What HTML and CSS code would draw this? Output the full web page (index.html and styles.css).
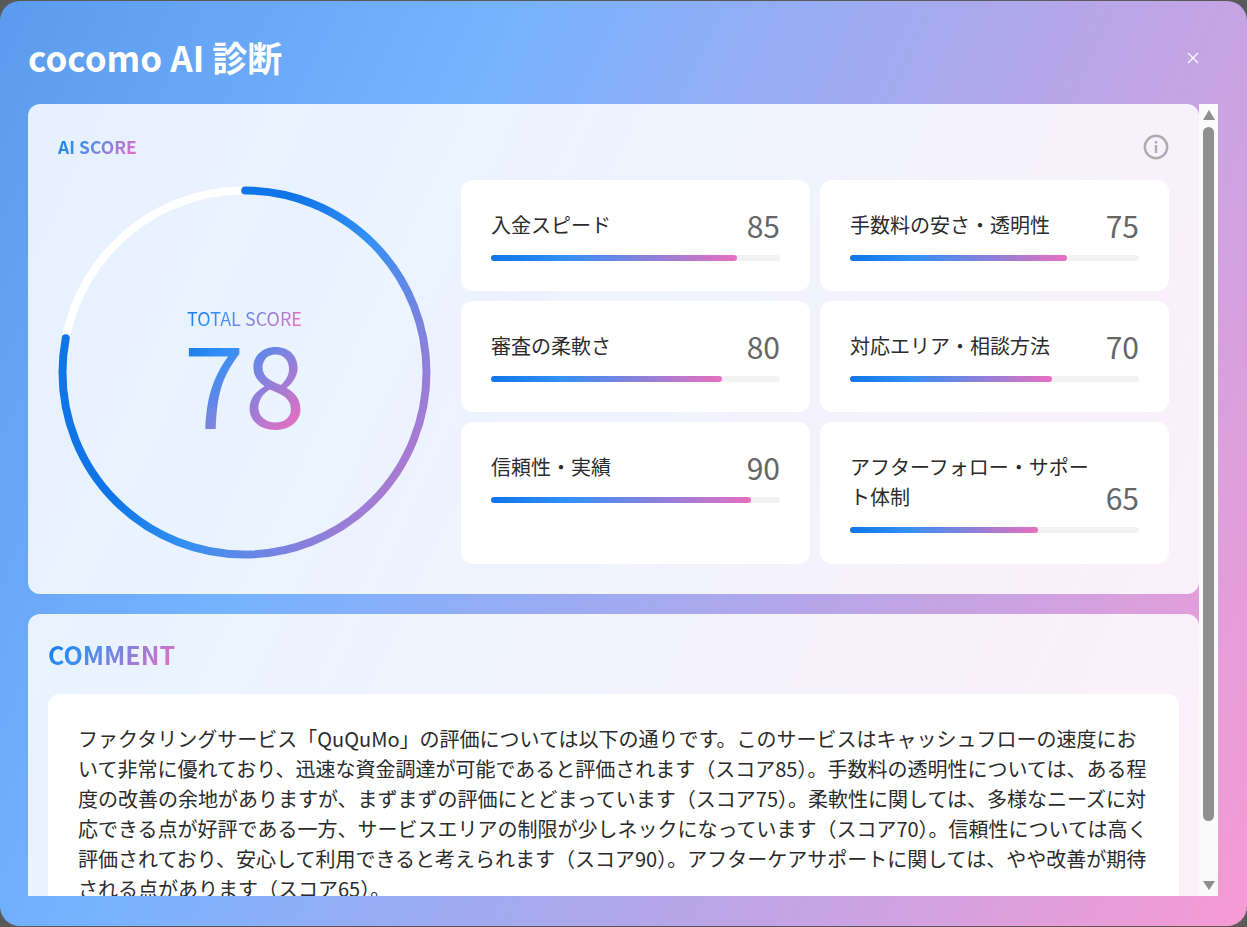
FILE: index.html
```html
<!DOCTYPE html>
<html lang="ja">
<head>
  <meta charset="UTF-8" />
  <meta name="viewport" content="width=device-width, initial-scale=1">
  <title>cocomo AI 診断</title>
  <link rel="stylesheet" href="styles.css">
</head>
<body>

  <div class="modal">
    <div class="modal-header">
      <h1 class="modal-title">cocomo AI 診断</h1>
      <svg class="close-icon" width="12" height="12" viewBox="0 0 12 12">
        <path d="M1 1L11 11M11 1L1 11" stroke="#fff" stroke-width="1.1" fill="none" />
      </svg>
    </div>

    <div class="modal-body">
      <div class="scroll-content">

        <section class="score-card">
          <div class="score-head">
            <span class="score-title grad-text">AI SCORE</span>
            <svg class="info-icon" width="26" height="26" viewBox="0 0 26 26">
              <circle cx="13" cy="13" r="11.2" stroke="#acacac" stroke-width="2.4" fill="none" />
              <rect x="11.8" y="11" width="2.4" height="8" fill="#acacac" />
              <rect x="11.8" y="7" width="2.4" height="2.5" fill="#acacac" />
            </svg>
          </div>

          <div class="score-main">
            <div class="ring">
              <svg width="373" height="373" viewBox="0 0 373 373">
                <defs>
                  <linearGradient id="ringGrad" gradientUnits="userSpaceOnUse" x1="145.5" y1="161.8" x2="412" y2="322">
                    <stop offset="0" stop-color="#0f75e8" />
                    <stop offset="0.27" stop-color="#3390f5" />
                    <stop offset="1" stop-color="#e86fc0" />
                  </linearGradient>
                </defs>
                <circle cx="186.5" cy="186.5" r="182" stroke="#fff" stroke-width="8" fill="none" />
                <circle cx="186.5" cy="186.5" r="182" stroke="url(#ringGrad)" stroke-width="8" fill="none"
                  stroke-linecap="round" stroke-dasharray="892 252" stroke-dashoffset="286" />
              </svg>
              <div class="ring-center">
                <span class="total-label grad-text">TOTAL SCORE</span>
                <span class="total-value grad-text">78</span>
              </div>
            </div>

            <div class="metric-grid">
              <div class="metric">
                <div class="metric-row"><span class="metric-label">入金スピード</span><span class="metric-value">85</span></div>
                <div class="metric-bar"><div class="metric-fill" style="width:85%"></div></div>
              </div>
              <div class="metric">
                <div class="metric-row"><span class="metric-label">手数料の安さ・透明性</span><span class="metric-value">75</span></div>
                <div class="metric-bar"><div class="metric-fill" style="width:75%"></div></div>
              </div>
              <div class="metric">
                <div class="metric-row"><span class="metric-label">審査の柔軟さ</span><span class="metric-value">80</span></div>
                <div class="metric-bar"><div class="metric-fill" style="width:80%"></div></div>
              </div>
              <div class="metric">
                <div class="metric-row"><span class="metric-label">対応エリア・相談方法</span><span class="metric-value">70</span></div>
                <div class="metric-bar"><div class="metric-fill" style="width:70%"></div></div>
              </div>
              <div class="metric">
                <div class="metric-row"><span class="metric-label">信頼性・実績</span><span class="metric-value">90</span></div>
                <div class="metric-bar"><div class="metric-fill" style="width:90%"></div></div>
              </div>
              <div class="metric">
                <div class="metric-row"><span class="metric-label">アフターフォロー・サポート体制</span><span class="metric-value">65</span></div>
                <div class="metric-bar"><div class="metric-fill" style="width:65%"></div></div>
              </div>
            </div>
          </div>
        </section>

        <section class="comment-card">
          <h2 class="comment-title"><span class="grad-text">COMMENT</span></h2>
          <div class="comment-box">
            <p>ファクタリングサービス「QuQuMo」の評価については以下の通りです。このサービスはキャッシュフローの速度において非常に優れており、迅速な資金調達が可能であると評価されます（スコア85）。手数料の透明性については、ある程度の改善の余地がありますが、まずまずの評価にとどまっています（スコア75）。柔軟性に関しては、多様なニーズに対応できる点が好評である一方、サービスエリアの制限が少しネックになっています（スコア70）。信頼性については高く評価されており、安心して利用できると考えられます（スコア90）。アフターケアサポートに関しては、やや改善が期待される点があります（スコア65）。</p>
          </div>
        </section>

      </div>

      <div class="scrollbar">
        <div class="arrow-up"></div>
        <div class="thumb"></div>
        <div class="arrow-down"></div>
      </div>
    </div>
  </div>

</body>
</html>
```

FILE: styles.css
```css
html, body {
  margin: 0;
  padding: 0;
  height: 100%;
  overflow: hidden;
  background: #5a5a5a;
  font-family: "Noto Sans CJK JP", "Noto Sans", sans-serif;
}

.modal {
  box-sizing: border-box;
  width: 1247px;
  height: 925px;
  margin-top: 1px;
  display: flex;
  flex-direction: column;
  border-radius: 20px;
  background: linear-gradient(115deg, #5a9bed 0%, #75b3ff 30%, #f79ad3 100%);
  overflow: hidden;
}

.modal-header {
  height: 103px;
  flex: none;
  display: flex;
  justify-content: space-between;
  align-items: center;
  padding: 8px 48px 0 28px;
  box-sizing: border-box;
}

.modal-title {
  margin: 0;
  font-size: 35px;
  line-height: 1;
  font-weight: 700;
  color: #fff;
}

.close-icon {
  margin-top: 2px;
}

.modal-body {
  flex: none;
  height: 792px;
  display: flex;
  margin: 0 29px 0 28px;
  overflow: hidden;
}

.scroll-content {
  flex: 1;
  min-width: 0;
  overflow: hidden;
}

.scrollbar {
  flex: none;
  width: 19px;
  height: 100%;
  box-sizing: border-box;
  padding: 6px 4px;
  background: #fafafa;
  display: flex;
  flex-direction: column;
  align-items: center;
}

.arrow-up {
  width: 0;
  height: 0;
  border-left: 6px solid transparent;
  border-right: 6px solid transparent;
  border-bottom: 10px solid #8f8f8f;
}

.arrow-down {
  width: 0;
  height: 0;
  margin-top: 60px;
  border-left: 6px solid transparent;
  border-right: 6px solid transparent;
  border-top: 9px solid #8f8f8f;
}

.thumb {
  width: 11px;
  height: 694px;
  margin-top: 7px;
  border-radius: 6px;
  background: #8f8f8f;
}

.grad-text {
  display: inline-block;
  background: linear-gradient(135deg, #0f75e8 0%, #3390f5 28%, #e86fc0 94%);
  -webkit-background-clip: text;
  background-clip: text;
  color: transparent;
}

.score-card {
  box-sizing: border-box;
  height: 490px;
  padding: 30px;
  border-radius: 12px;
  background: rgba(255, 255, 255, 0.85);
}

.score-head {
  height: 26px;
  margin-bottom: 20px;
  display: flex;
  justify-content: space-between;
  align-items: center;
}

.score-title {
  font-size: 17.5px;
  line-height: 26px;
  font-weight: 700;
}

.score-main {
  display: flex;
  align-items: center;
  gap: 30px;
}

.ring {
  position: relative;
  flex: none;
  width: 373px;
  height: 373px;
}

.ring svg {
  display: block;
}

.ring-center {
  position: absolute;
  top: 0;
  left: 0;
  width: 100%;
  height: 100%;
  box-sizing: border-box;
  padding-bottom: 9px;
  display: flex;
  flex-direction: column;
  align-items: center;
  justify-content: center;
}

.total-label {
  font-size: 18px;
  line-height: 26px;
}

.total-value {
  font-size: 110px;
  line-height: 100px;
}

.metric-grid {
  flex: 1;
  min-width: 0;
  display: grid;
  grid-template-columns: 1fr 1fr;
  grid-template-rows: 111px 111px 142px;
  gap: 10px;
}

.metric {
  padding: 30px;
  border-radius: 12px;
  background: #fff;
}

.metric-row {
  display: flex;
  justify-content: space-between;
  align-items: flex-end;
  gap: 16px;
  margin-bottom: 15px;
}

.metric-label {
  font-size: 20px;
  line-height: 30px;
  color: #2b2b2b;
}

.metric-value {
  flex: none;
  font-size: 30px;
  line-height: 29px;
  color: #666;
}

.metric-bar {
  height: 6px;
  border-radius: 3px;
  background: #f2f2f2;
}

.metric-fill {
  height: 100%;
  border-radius: 3px;
  background: linear-gradient(90deg, #0f75e8 0%, #3390f5 30%, #e86fc0 100%);
}

.comment-card {
  margin-top: 20px;
  padding: 20px;
  border-radius: 12px 12px 0 0;
  background: rgba(255, 255, 255, 0.85);
}

.comment-title {
  margin: 0 0 20px;
  font-size: 25px;
  line-height: 40px;
  font-weight: 700;
}

.comment-box {
  padding: 30px;
  border-radius: 12px;
  background: #fff;
}

.comment-box p {
  margin: 0;
  font-size: 20px;
  line-height: 30px;
  color: #2b2b2b;
}
```
